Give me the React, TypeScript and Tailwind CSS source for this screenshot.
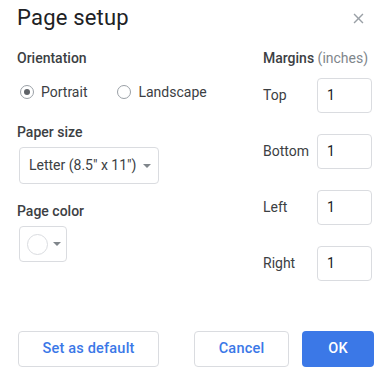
import React from 'react';

function Radio({ checked, label }: { checked?: boolean; label: string }) {
    return (
        <label className="flex items-center h-[20px]">
            <span className="w-[14px] h-[14px] rounded-full border border-[#9aa0a6] flex items-center justify-center">
                {checked && <span className="w-[6px] h-[6px] rounded-full bg-[#5f6368]" />}
            </span>
            <span className="ml-[7px] text-[14px] text-[#3c4043]">{label}</span>
        </label>
    );
}

function Caret() {
    return (
        <svg width="8" height="4" viewBox="0 0 8 4" className="shrink-0">
            <path d="M0 0 L8 0 L4 4 Z" fill="#80868b" />
        </svg>
    );
}

function MarginRow({ label }: { label: string }) {
    return (
        <div className="flex items-center h-[35px]">
            <span className="w-[54px] text-[14px] text-[#3c4043]">{label}</span>
            <div className="w-[55px] h-[35px] border border-[#dadce0] rounded-[4px] flex items-center pl-[9px] text-[14px] text-[#202124]">
                1
            </div>
        </div>
    );
}

export default function App() {
    return (
        <div className="w-[385px] h-[379px] bg-white flex flex-col font-['Roboto','Liberation_Sans',sans-serif]">
            <div className="flex items-center justify-between pl-[17px] pr-[18px] pt-[4px]">
                <h1 className="text-[22px] leading-[28px] tracking-[0.2px] text-[#202124]">Page setup</h1>
                <svg width="17" height="17" viewBox="0 0 24 24">
                    <path
                        d="M19 6.41L17.59 5 12 10.59 6.41 5 5 6.41 10.59 12 5 17.59 6.41 19 12 13.41 17.59 19 19 17.59 13.41 12z"
                        fill="#9aa0a6"
                    />
                </svg>
            </div>

            <div className="flex pl-[17px] pr-[13px] mt-[16px]">
                <div className="flex-1 flex flex-col items-start">
                    <div className="text-[14px] leading-[20px] font-medium text-[#3c4043]">Orientation</div>
                    <div className="flex items-center mt-[14px] ml-[3px] gap-[30px]">
                        <Radio checked label="Portrait" />
                        <Radio label="Landscape" />
                    </div>

                    <div className="mt-[20px] text-[14px] leading-[20px] font-medium text-[#3c4043]">Paper size</div>
                    <div className="mt-[5px] ml-[2px] w-[140px] h-[37px] border border-[#dadce0] rounded-[4px] flex items-center pl-[9px] gap-[7px]">
                        <span className="text-[14px] text-[#3c4043]">Letter (8.5" x 11")</span>
                        <Caret />
                    </div>

                    <div className="mt-[17px] text-[14px] leading-[20px] font-medium text-[#3c4043]">Page color</div>
                    <div className="mt-[5px] ml-[2px] w-[48px] h-[36px] border border-[#dadce0] rounded-[4px] flex items-center pl-[7px] gap-[5px]">
                        <span className="w-[21px] h-[21px] rounded-full border border-[#dadce0] bg-white" />
                        <Caret />
                    </div>
                </div>

                <div className="w-[109px] flex flex-col">
                    <div className="text-[14px] leading-[20px] whitespace-nowrap">
                        <span className="font-medium text-[#3c4043]">Margins</span>
                        <span className="text-[#80868b]"> (inches)</span>
                    </div>
                    <div className="mt-[10px] flex flex-col gap-[21px]">
                        <MarginRow label="Top" />
                        <MarginRow label="Bottom" />
                        <MarginRow label="Left" />
                        <MarginRow label="Right" />
                    </div>
                </div>
            </div>

            <div className="mt-auto flex items-center pl-[18px] pr-[11px] pb-[12px]">
                <button className="w-[141px] h-[36px] border border-[#dadce0] rounded-[4px] text-[14.5px] font-medium tracking-[0.2px] text-[#3b78e7]">
                    Set as default
                </button>
                <div className="flex-1" />
                <button className="w-[95px] h-[36px] border border-[#dadce0] rounded-[4px] text-[14.5px] font-medium tracking-[0.2px] text-[#3b78e7]">
                    Cancel
                </button>
                <button className="ml-[13px] w-[72px] h-[36px] rounded-[4px] bg-[#3b78e7] text-[14.5px] font-medium tracking-[0.2px] text-white">
                    OK
                </button>
            </div>
        </div>
    );
}
